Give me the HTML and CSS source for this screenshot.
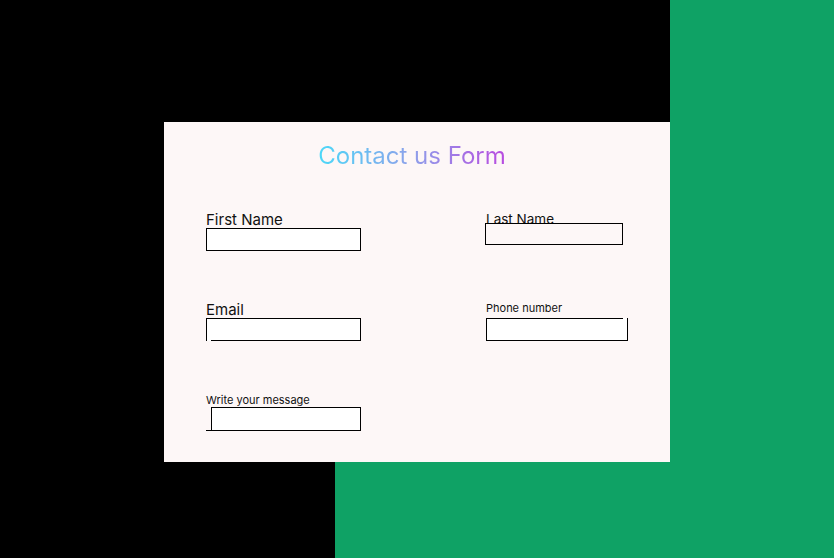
FILE: index.html
```html
<!DOCTYPE html>
<html lang="en">
<head>
<meta charset="utf-8">
<title>Contact us Form</title>
<link rel="stylesheet" href="styles.css">
</head>
<body>
<form class="card">
  <h1 class="title"><span class="title-text">Contact us Form</span></h1>
  <div class="fields">
    <div class="field">
      <label class="label label-lg" for="first">First Name</label>
      <input class="box box-first" id="first" type="text">
    </div>
    <div class="field">
      <label class="label label-last" for="last">Last Name</label>
      <input class="box box-last" id="last" type="text">
    </div>
    <div class="field">
      <label class="label label-lg" for="email">Email</label>
      <input class="box box-email" id="email" type="email">
    </div>
    <div class="field">
      <label class="label label-sm" for="phone">Phone number</label>
      <input class="box box-phone" id="phone" type="tel">
    </div>
    <div class="field">
      <label class="label label-sm label-msg" for="msg">Write your message</label>
      <div class="msg-line"><input class="box box-msg" id="msg" type="text"></div>
    </div>
  </div>
</form>
</body>
</html>
```
FILE: styles.css
```css
html, body {
  margin: 0;
  padding: 0;
}
body {
  width: 834px;
  height: 558px;
  overflow: hidden;
  font-family: Inter, "Noto Sans", sans-serif;
  background:
    linear-gradient(#0fa265, #0fa265) 670px 0 / 164px 100% no-repeat,
    linear-gradient(#0fa265, #0fa265) 335px 462px / 499px 96px no-repeat,
    #000;
}
.card {
  box-sizing: border-box;
  width: 506px;
  height: 340px;
  margin: 122px 0 0 164px;
  background: #fdf7f7;
  padding-top: 19px;
}
.title {
  margin: 0;
  padding-right: 10px;
  text-align: center;
  font-size: 24px;
  line-height: 29px;
  font-weight: 400;
}
.title-text {
  background: linear-gradient(90deg, #4cd8f8 0%, #8ea0ea 50%, #b84ae0 100%);
  -webkit-background-clip: text;
  background-clip: text;
  color: transparent;
}
.fields {
  display: grid;
  grid-template-columns: 280px 1fr;
  grid-auto-rows: 90px;
  padding-left: 42px;
  margin-top: 40px;
}
.field {
  display: flex;
  flex-direction: column;
  align-items: flex-start;
}
.label {
  color: #111;
  display: block;
}
.label-lg {
  font-size: 15px;
  line-height: 17px;
  margin-top: 1px;
}
.label-last {
  font-size: 13.5px;
  line-height: 17px;
  margin-top: 1px;
}
.label-sm {
  font-size: 11px;
  line-height: 14px;
  margin-top: 1px;
  margin-bottom: 3px;
}
.label-msg {
  margin-top: 3px;
  margin-bottom: 0;
}
.box {
  display: block;
  box-sizing: border-box;
  margin: 0;
  padding: 0;
  font: inherit;
  -webkit-appearance: none;
  appearance: none;
  outline: none;
  border-radius: 0;
  background-color: #fff;
  border: 1px solid #000;
}
.box-first {
  width: 155px;
  height: 23px;
}
.box-last {
  width: 138px;
  height: 22px;
  margin: -5px 0 0 -1px;
  background: transparent;
}
.box-email {
  width: 155px;
  height: 23px;
  border-bottom: none;
  background: linear-gradient(#000, #000) right bottom / calc(100% - 4px) 1px no-repeat, #fff;
}
.box-phone {
  width: 142px;
  height: 23px;
  border-top: none;
  background: linear-gradient(#000, #000) left top / calc(100% - 4px) 1px no-repeat, #fff;
}
.msg-line {
  width: 155px;
  border-bottom: 1px solid #000;
}
.box-msg {
  width: 150px;
  height: 23px;
  margin-left: 5px;
  border-bottom: none;
}
```
